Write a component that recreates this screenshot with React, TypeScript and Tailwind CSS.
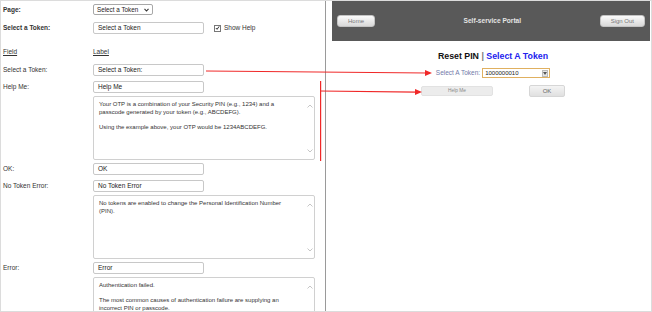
import React from "react";

function Input({ value }: { value: string }) {
  return (
    <div className="w-[111px] h-[12px] border border-[#c8c8c8] rounded-[2px] bg-white flex items-center pl-[4px] text-[6.5px] text-[#222]">
      {value}
    </div>
  );
}

function Row({ label, value, bold = false }: { label: string; value: string; bold?: boolean }) {
  return (
    <div className="flex items-center h-[12px]">
      <div className={`w-[90px] text-[6.5px] text-[#333] ${bold ? "font-bold" : ""}`}>{label}</div>
      <Input value={value} />
    </div>
  );
}

function Chevron({ up }: { up?: boolean }) {
  return (
    <svg width="6" height="4" viewBox="0 0 6 4" className="text-[#b8b8b8]">
      <polyline
        points={up ? "0.5,3.5 3,1 5.5,3.5" : "0.5,0.5 3,3 5.5,0.5"}
        fill="none"
        stroke="currentColor"
        strokeWidth="0.8"
      />
    </svg>
  );
}

function TextBox({ children, tall = false }: { children: React.ReactNode; tall?: boolean }) {
  return (
    <div className="flex">
      <div className="w-[90px]" />
      <div
        className={`w-[222px] ${tall ? "h-[70px]" : "h-[64px]"} border border-[#d0d0d0] rounded-[2px] bg-white flex`}
      >
        <div className="flex-1 pl-[5px] pt-[3px] text-[6px] leading-[8px] text-[#333]">{children}</div>
        <div className="w-[9px] flex flex-col items-center justify-between pt-[7px] pb-[6px]">
          <Chevron up />
          {!tall && <Chevron />}
        </div>
      </div>
    </div>
  );
}

function HeaderButton({ label }: { label: string }) {
  return (
    <div className="h-[12px] px-[10px] rounded-[3px] bg-gradient-to-b from-[#fbfbfb] to-[#d9d9d9] border border-[#c4c4c4] flex items-center text-[6px] text-[#777]">
      {label}
    </div>
  );
}

export default function App() {
  return (
    <div className="relative w-[652px] h-[312px] overflow-hidden bg-white border border-[#dcdcdc] flex font-['Liberation_Sans',Arial,sans-serif]">
      {/* Left: token page editor */}
      <div className="w-[325px] shrink-0 border-r-[1.5px] border-[#9a9a9a] pl-[2px] pt-[3px] flex flex-col">
        <div className="flex items-center h-[11px]">
          <div className="w-[90px] text-[6.5px] text-[#333] font-bold">Page:</div>
          <div className="w-[60px] h-[11px] border border-[#a8a8a8] rounded-[2px] bg-white flex items-center justify-between pl-[3px] pr-[3px] text-[6.3px] text-[#222]">
            <span>Select a Token</span>
            <svg width="5" height="4" viewBox="0 0 5 4">
              <polyline points="0.5,0.8 2.5,3 4.5,0.8" fill="none" stroke="#333" strokeWidth="1.1" />
            </svg>
          </div>
        </div>

        <div className="flex items-center h-[12px] mt-[7px]">
          <div className="w-[90px] text-[6.5px] text-[#333] font-bold">Select a Token:</div>
          <Input value="Select a Token" />
          <div className="ml-[10px] w-[7px] h-[7px] border border-[#777] bg-white flex items-center justify-center">
            <svg width="6" height="6" viewBox="0 0 6 6">
              <polyline points="1,3 2.5,4.6 5,1" fill="none" stroke="#222" strokeWidth="1.1" />
            </svg>
          </div>
          <span className="ml-[3px] text-[6.5px] text-[#333]">Show Help</span>
        </div>

        <div className="flex items-center h-[10px] mt-[13px] text-[6.5px] text-[#333]">
          <span className="w-[90px] underline">Field</span>
          <span className="underline">Label</span>
        </div>

        <div className="flex flex-col mt-[7px]">
          <Row label="Select a Token:" value="Select a Token:" />
          <div className="mt-[5px]">
            <Row label="Help Me:" value="Help Me" />
          </div>
          <div className="mt-[3px]">
            <TextBox>
              <p>Your OTP is a combination of your Security PIN (e.g., 1234) and a</p>
              <p>passcode generated by your token (e.g., ABCDEFG).</p>
              <p className="mt-[7px]">Using the example above, your OTP would be 1234ABCDEFG.</p>
            </TextBox>
          </div>
          <div className="mt-[3px]">
            <Row label="OK:" value="OK" />
          </div>
          <div className="mt-[5px]">
            <Row label="No Token Error:" value="No Token Error" />
          </div>
          <div className="mt-[3px]">
            <TextBox>
              <p>No tokens are enabled to change the Personal Identification Number</p>
              <p>(PIN).</p>
            </TextBox>
          </div>
          <div className="mt-[3px]">
            <Row label="Error:" value="Error" />
          </div>
          <div className="mt-[3px]">
            <TextBox tall>
              <p>Authentication failed.</p>
              <p className="mt-[7px]">The most common causes of authentication failure are supplying an</p>
              <p>incorrect PIN or passcode.</p>
            </TextBox>
          </div>
        </div>
      </div>

      {/* Right: preview of the portal */}
      <div className="flex-1 ml-[6px] mr-[1px] flex flex-col">
        <div className="h-[40px] bg-[#595959] flex items-center justify-between px-[5px]">
          <HeaderButton label="Home" />
          <span className="text-[6.6px] font-bold text-[#e4e4e4] ml-[10px]">Self-service Portal</span>
          <HeaderButton label="Sign Out" />
        </div>

        <div className="flex flex-col items-center pl-[4px]">
          <div className="mt-[9px] text-[8.8px] font-bold leading-[12px]">
            <span className="text-[#111]">Reset PIN</span>
            <span className="text-[#777]"> | </span>
            <span className="text-[#2222ee]">Select A Token</span>
          </div>

          <div className="mt-[6px] flex items-center">
            <span className="text-[6.5px] text-[#7079a8]">Select A Token:</span>
            <div className="ml-[2px] w-[68px] h-[10px] border border-[#e0b060] bg-white flex items-center justify-between pl-[2px] pr-[1px]">
              <span className="text-[6px] text-[#222]">1000000010</span>
              <div className="w-[6px] h-[7px] bg-[#e6e6e6] border border-[#bbb] flex items-center justify-center">
                <svg width="4" height="3" viewBox="0 0 4 3">
                  <polygon points="0,0 4,0 2,3" fill="#555" />
                </svg>
              </div>
            </div>
          </div>

          <div className="mt-[7px] flex items-center gap-[36px]">
            <div className="w-[72px] h-[10px] rounded-[2px] bg-[#ececec] border border-[#e2e2e2] flex items-center justify-center text-[4.8px] text-[#888]">
              Help Me
            </div>
            <div className="w-[36px] h-[12px] rounded-[2px] bg-gradient-to-b from-[#f4f4f4] to-[#e0e0e0] border border-[#d6d6d6] flex items-center justify-center text-[6px] text-[#666]">
              OK
            </div>
          </div>
        </div>
      </div>

      {/* Red annotation arrows */}
      <svg className="absolute inset-0 pointer-events-none" width="652" height="312" viewBox="0 0 652 312">
        <line x1="205" y1="70" x2="426" y2="72" stroke="#f02828" strokeWidth="1" />
        <polygon points="424,69 431,72 424,75" fill="#f02828" />
        <rect x="319" y="80" width="1.2" height="80" fill="#f02828" />
        <line x1="319" y1="90" x2="416" y2="91.2" stroke="#f02828" strokeWidth="1.2" />
        <polygon points="414,88 421,91 414,94" fill="#f02828" />
      </svg>
    </div>
  );
}
